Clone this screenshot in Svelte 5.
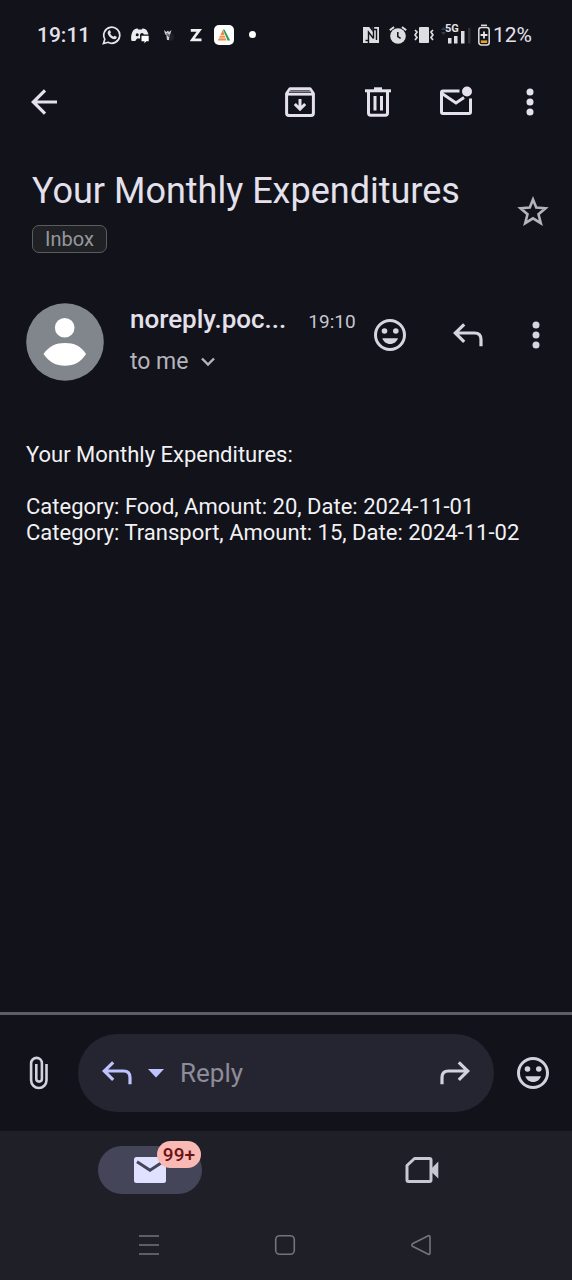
<script>
  let reply = $state('');
  const entries = [
    { category: 'Food', amount: 20, date: '2024-11-01' },
    { category: 'Transport', amount: 15, date: '2024-11-02' }
  ];
</script>

{#snippet smile()}
  <svg width="32" height="32" viewBox="0 0 32 32" fill="currentColor" aria-hidden="true">
    <circle cx="16" cy="16" r="14.5" fill="none" stroke="currentColor" stroke-width="3" />
    <circle cx="10.5" cy="12" r="2.8" />
    <circle cx="21.8" cy="12" r="2.8" />
    <path d="M8.3 19.2H24C22.800 22.600 20 25 16.100 25S9.500 22.600 8.300 19.200Z" />
  </svg>
{/snippet}

{#snippet replyArrow()}
  <svg width="30" height="24" viewBox="0 0 30 24" fill="none" stroke="currentColor" stroke-width="3.200" aria-hidden="true">
    <path d="M11.200 1.300 2.200 10 11.200 18.800M2.500 10H21.500Q28 10 28 16.500V23.200" />
  </svg>
{/snippet}

{#snippet dots()}
  <svg width="8" height="28" viewBox="0 0 8 28" fill="currentColor" aria-hidden="true">
    <circle cx="4" cy="4" r="3.500" /><circle cx="4" cy="14" r="3.500" /><circle cx="4" cy="24" r="3.500" />
  </svg>
{/snippet}

<div class="screen">
  <header class="status">
    <div class="side">
      <span class="clock">19:11</span>
      <span class="cell">
        <svg width="20" height="20" viewBox="0 0 20 20" aria-hidden="true">
          <path d="M1.500 18.500 2.800 14.200A8 8 0 1 1 6 17.300Z" fill="none" stroke="#e6e6ea" stroke-width="1.700" />
          <path d="M6.900 5.400c.5-.4 1-.2 1.200.2l.8 1.700c.1.400-.6 1.100-.7 1.300.7 1.500 1.800 2.500 3.200 3.100.3-.1 1-1 1.300-.9l1.800.9c.4.200.2 1.200-.2 1.700-1 1-2.500 1-4 .3-2-.9-3.800-2.800-4.500-4.900-.4-1.400 0-2.700 1.100-3.400Z" fill="#e6e6ea" />
        </svg>
      </span>
      <span class="cell">
        <svg width="20" height="18" viewBox="0 0 20 18" aria-hidden="true">
          <path d="M1.300 14.500C.6 10 1.800 6 3.800 3.800 5.200 2.800 6.600 2.500 7.600 2.500l.6 1h3.600l.6-1c1.200 0 2.600.4 3.800 1.300 1 1.400 1.800 2.700 2.200 4.800H10.200v4H7L5.500 14.800C3.800 15.300 2.300 15.200 1.300 14.500Z" fill="#ececf0" />
          <circle cx="7.200" cy="8.800" r="1.500" fill="#12121a" /><path d="M10.200 12V8.800a1.800 1.800 0 0 1 3.600 0Z" fill="#12121a" />
          <path d="M11.500 9.800h7.200v5.500h-2.400l-1.900 1.900v-1.900h-2.900Z" fill="#fff" />
        </svg>
      </span>
      <span class="cell">
        <svg width="14" height="14" viewBox="0 0 14 14" aria-hidden="true">
          <circle cx="9" cy="9" r="4" fill="#202027" />
          <path d="M3 2 5.500 4 7 2.500 8 4 10.500 2 9.500 5.500 8.500 7 8 12H6L5.500 7.500 4 6Z" fill="#c9c9ce" />
          <path d="M6.200 5v3M7.700 6v3" stroke="#33333a" stroke-width=".8" />
        </svg>
      </span>
      <span class="cell">
        <svg width="12" height="14" viewBox="0 0 12 14" aria-hidden="true"><path d="M.8 2.300H9.300L2.300 11.800H11.500" fill="none" stroke="#f0f0f3" stroke-width="2.700" /></svg>
      </span>
      <span class="cell">
        <svg width="20" height="20" viewBox="0 0 20 20" aria-hidden="true">
          <rect width="20" height="20" rx="5" fill="#fff" />
          <path d="M9 4.500 3.800 15.500H12.500L10.500 10Z" fill="#ee8a4a" /><path d="M9 4.500H10.500L16.200 15.500H13.500Z" fill="#2c9b57" />
          <path d="M5 10.500h6M4 13h8.500" stroke="#fff" stroke-width=".7" />
        </svg>
      </span>
      <span class="cell"><i class="dot"></i></span>
    </div>
    <div class="side">
      <span class="cell narrow">
        <svg width="18" height="18" viewBox="0 0 18 18" aria-hidden="true">
          <rect x="0" y="1" width="16" height="16" fill="#dedee2" />
          <path d="M5.500 17V6L10.500 12.500M10.500 1V12.500M5.500 14.500H2.500M10.500 3.500H13.500V14" fill="none" stroke="#12121a" stroke-width="1.400" />
          <path d="M6.200 1H9.800V6Z" fill="#12121a" />
        </svg>
      </span>
      <span class="cell narrow">
        <svg width="18" height="18" viewBox="0 0 18 18" aria-hidden="true">
          <circle cx="9" cy="10" r="7.800" fill="#dedee2" />
          <path d="M.8 4.300 5 1M17.200 4.300 13 1" stroke="#dedee2" stroke-width="2" />
          <path d="M8.800 6v4.500l2.800 1.900" fill="none" stroke="#12121a" stroke-width="1.500" />
        </svg>
      </span>
      <span class="cell narrow">
        <svg width="20" height="18" viewBox="0 0 20 18" aria-hidden="true">
          <rect x="5" y="1" width="10" height="16" rx="1" fill="#dedee2" />
          <path d="M1 4 3 6 1 9 3 11.500 1 14M19 4 17 6 19 9 17 11.500 19 14" fill="none" stroke="#dedee2" stroke-width="1.700" />
        </svg>
      </span>
      <span class="signal">
        <small>5G</small>
        <svg width="32" height="20" viewBox="0 0 32 20" fill="#dedee2" aria-hidden="true">
          <path d="M0 5 2.500 2 5 5ZM0 7 2.500 10 5 7Z" fill="#3a3a43" />
          <path d="M7 13h3.500v5.500H7ZM13 11h3.500v7.500H13ZM20 6h3.500v12.500H20Z" /><path d="M27 3H29.500V18.500H27Z" fill="#30303a" />
        </svg>
      </span>
      <svg width="14" height="22" viewBox="0 0 14 22" aria-hidden="true">
        <path d="M4 1.300h6" stroke="#dedee2" stroke-width="1.500" />
        <rect x="1.800" y="3.500" width="10.400" height="17.500" rx="2.500" fill="none" stroke="#dedee2" stroke-width="1.500" />
        <path d="M7 7.500v7M3.600 11h6.800" stroke="#e9e9ed" stroke-width="1.800" /><path d="M3.800 17.700h6.400" stroke="#e8a21c" stroke-width="2.600" />
      </svg>
      <span class="percent">12%</span>
    </div>
  </header>

  <nav class="toolbar" aria-label="Message actions">
    <button class="icon back" aria-label="Back">
      <svg width="26" height="28" viewBox="0 0 26 28" fill="none" stroke="currentColor" stroke-width="3.200" aria-hidden="true"><path d="M14 2.300 2.300 14 14 25.700M2.600 14H26" /></svg>
    </button>
    <button class="icon" aria-label="Archive">
      <svg width="30" height="30" viewBox="0 0 30 30" aria-hidden="true">
        <path d="M1.600 6.500 5 1.700H25L28.400 6.500V26Q28.400 28.400 26 28.400H4Q1.600 28.400 1.600 26Z" fill="none" stroke="currentColor" stroke-width="3" stroke-linejoin="round" />
        <path d="M4.500 4.500H25.500" stroke="#85858d" stroke-width="2" /><path d="M2 7.300H28" stroke="currentColor" stroke-width="2.600" />
        <path d="M15 12v9.500M9.800 17 15 22.200 20.200 17" fill="none" stroke="currentColor" stroke-width="3" />
      </svg>
    </button>
    <button class="icon" aria-label="Delete">
      <svg width="26" height="30" viewBox="0 0 26 30" fill="none" stroke="currentColor" stroke-width="3" aria-hidden="true">
        <path d="M0 3.800H26" /><path d="M9 1.800h8" /><path d="M3.500 4V26Q3.500 28.200 5.700 28.200H20.300Q22.500 28.200 22.500 26V4M10 9V23.500M16.500 9V23.500" />
      </svg>
    </button>
    <button class="icon" aria-label="Mark as unread">
      <svg width="34" height="32" viewBox="0 0 34 32" fill="none" stroke="currentColor" stroke-width="3" aria-hidden="true">
        <path d="M20.500 5H4Q2.500 5 2.500 6.500V26Q2.500 27.500 4 27.500H30Q31.500 27.500 31.500 26V12.500M3 7.500 17 17 25 11.500" />
        <circle cx="28" cy="5.500" r="5" fill="currentColor" stroke="none" />
      </svg>
    </button>
    <button class="icon slim" aria-label="More options">{@render dots()}</button>
  </nav>

  <main>
    <section class="subject">
      <div class="heading">
        <h1>Your Monthly Expenditures</h1>
        <span class="chip">Inbox</span>
      </div>
      <button class="icon slim star" aria-label="Add star">
        <svg width="32" height="30" viewBox="0 0 32 30" fill="none" stroke="currentColor" stroke-width="2.600" aria-hidden="true">
          <path d="M16 3.500 19.200 11.500 28.500 12.200 21.500 18.200 23.800 27.200 16 22.300 8.200 27.200 10.500 18.200 3.500 12.200 12.800 11.500Z" />
        </svg>
      </button>
    </section>

    <section class="sender">
      <svg width="78" height="78" viewBox="0 0 78 78" aria-hidden="true">
        <circle cx="39" cy="39" r="38.800" fill="#80868b" /><circle cx="38.700" cy="24.800" r="9.800" fill="#fff" />
        <path d="M17.500 51C23 43 30 40 39 40S55 43 60 51C55 59 48 62.800 39 62.800S23 59 17.500 51Z" fill="#fff" />
      </svg>
      <div class="who">
        <div class="line"><strong>noreply.poc...</strong><time>19:10</time></div>
        <button class="to">to me
          <svg width="14" height="10" viewBox="0 0 14 10" fill="none" stroke="currentColor" stroke-width="2.400" aria-hidden="true"><path d="M1 1.500 7 7.500 13 1.500" /></svg>
        </button>
      </div>
      <div class="actions">
        <button class="icon" aria-label="Add reaction">{@render smile()}</button>
        <button class="icon" aria-label="Reply">{@render replyArrow()}</button>
        <button class="icon slim" aria-label="More message options">{@render dots()}</button>
      </div>
    </section>

    <article>
      <p>Your Monthly Expenditures:</p>
      <p>
        {#each entries as e}
          <span>Category: {e.category}, Amount: {e.amount}, Date: {e.date}</span>
        {/each}
      </p>
    </article>
  </main>

  <form class="composer" onsubmit={(e) => e.preventDefault()}>
    <button type="button" class="icon slim" aria-label="Attach file">
      <svg width="20" height="34" viewBox="0 0 20 34" fill="none" stroke="currentColor" stroke-width="2.600" aria-hidden="true">
        <path d="M17.500 8V24.300A7.700 7.700 0 0 1 2.100 24.300V7.300A5.400 5.400 0 0 1 12.900 7.300V22.800A2.800 2.800 0 0 1 7.300 22.800V8" />
      </svg>
    </button>
    <div class="field">
      <button type="button" class="accent" aria-label="Reply">{@render replyArrow()}</button>
      <button type="button" class="accent" aria-label="Choose reply type">
        <svg width="16" height="10" viewBox="0 0 16 10" fill="currentColor" aria-hidden="true"><path d="M0 1H16L8 9.500Z" /></svg>
      </button>
      <input type="text" aria-label="Reply text" placeholder="Reply" bind:value={reply} />
      <button type="button" class="forward" aria-label="Forward">{@render replyArrow()}</button>
    </div>
    <button type="button" class="icon slim" aria-label="Insert emoji">{@render smile()}</button>
  </form>

  <footer>
    <nav class="tabs" aria-label="Apps">
      <button class="tab" aria-label="Mail">
        <span class="pill">
          <svg width="32" height="26" viewBox="0 0 32 26" aria-hidden="true">
            <rect width="32" height="26" rx="2.500" fill="#e0e0ff" /><path d="M3 4.800 16 13.200 29 4.800" fill="none" stroke="#444559" stroke-width="3" />
          </svg>
          <span class="badge">99+</span>
        </span>
      </button>
      <button class="tab" aria-label="Meet">
        <svg width="34" height="28" viewBox="0 0 34 28" aria-hidden="true">
          <path d="M9.500 2.500H24.500Q26 2.500 26 4V24Q26 25.500 24.500 25.500H3.500Q2 25.500 2 24V9.500Z" fill="none" stroke="currentColor" stroke-width="3" stroke-linejoin="round" />
          <path d="M26 13 33.300 5.500V22.500L26 15.500Z" fill="currentColor" />
        </svg>
      </button>
    </nav>
    <nav class="system" aria-label="System">
      <button aria-label="Recent apps"><svg width="22" height="22" viewBox="0 0 22 22" aria-hidden="true"><path d="M1 2H21M1 11H21M1 20H21" /></svg></button>
      <button aria-label="Home"><svg width="22" height="22" viewBox="0 0 22 22" aria-hidden="true"><rect x="1.700" y="1.700" width="18.600" height="18.600" rx="4" /></svg></button>
      <button aria-label="Go back"><svg width="22" height="22" viewBox="0 0 22 22" aria-hidden="true"><path d="M18.300 1.800Q20 1.200 20 3V19Q20 20.800 18.300 20.200L2.500 12.200Q1 11 2.500 9.800Z" /></svg></button>
    </nav>
  </footer>
</div>

<style>
  :global(body) { margin: 0; background: #12121a; }
  .screen {
    display: flex; flex-direction: column; min-height: 100vh;
    background: #12121a; color: #e4e1ec; font-family: Roboto, sans-serif;
  }
  svg { display: block; flex: none; }
  button {
    display: flex; align-items: center; justify-content: center;
    padding: 0; border: 0; background: none; color: inherit; font: inherit; cursor: pointer;
  }
  .icon { width: 48px; height: 48px; flex: none; }
  .icon.slim { width: 40px; }

  .status { display: flex; justify-content: space-between; height: 69px; padding: 0 40px 0 37px; box-sizing: border-box; }
  .side { display: flex; align-items: center; }
  .clock { width: 61px; font-size: 21px; font-weight: 500; }
  .cell { display: flex; justify-content: center; width: 28px; }
  .cell.narrow { width: 26px; }
  .dot { width: 7px; height: 7px; border-radius: 50%; background: #fff; }
  .signal { position: relative; width: 40px; display: flex; justify-content: center; }
  .signal small { position: absolute; top: -2px; left: 8px; font-size: 11px; line-height: 12px; font-weight: 700; }
  .percent { margin-left: 2px; font-size: 21px; }

  .toolbar { display: flex; align-items: center; gap: 30px; height: 66px; padding: 0 22px 0 20px; }
  .back { margin-right: auto; }

  .subject { display: flex; align-items: center; justify-content: space-between; padding: 34px 19px 0 32px; }
  h1 { margin: 0; font-size: 36px; line-height: 44px; font-weight: 400; }
  .chip {
    display: inline-block; margin-top: 12px; padding: 0 12px; border: 1px solid #5c5c60; border-radius: 7px;
    background: #202125; color: #96979c; font-size: 20px; line-height: 26px;
  }
  .star { color: #b5b4bd; }

  .sender { display: flex; align-items: center; gap: 26px; padding: 46px 16px 0 26px; }
  .who { flex: 1; min-width: 0; margin-bottom: 2px; }
  .line { display: flex; align-items: baseline; gap: 22px; line-height: 40px; white-space: nowrap; }
  strong { font-size: 26px; font-weight: 500; }
  time { font-size: 19px; color: #c7c5d0; }
  .to { gap: 12px; font-size: 23px; line-height: 40px; color: #b5b4bd; }
  .actions { display: flex; gap: 30px; margin-bottom: 14px; color: #d6d4de; }
  .actions .slim { margin-left: -6px; }

  article { padding: 58px 26px; color: #f1f1f4; font-size: 22px; line-height: 26px; }
  p { margin: 0 0 26px; }
  p span { display: block; }

  .composer {
    display: flex; align-items: center; gap: 19px; margin-top: auto; padding: 19px;
    border-top: 3px solid #5e5e67; color: #d3d1dc;
  }
  .field { display: flex; flex: 1; align-items: center; min-width: 0; height: 78px; padding: 0 24px; border-radius: 39px; background: #252531; box-sizing: border-box; gap: 16px; }
  .accent { height: 48px; color: #bec2ff; }
  .forward { height: 48px; transform: scaleX(-1); }
  input { flex: 1; min-width: 0; padding: 0; border: 0; outline: 0; background: none; color: #e4e1ec; font: 26px Roboto, sans-serif; }
  input::placeholder { color: #8d8c98; opacity: 1; }

  footer { background: #1f1f27; }
  .tabs { display: flex; justify-content: space-around; padding: 15px 14px 16px; }
  .tab { flex: 1; color: #c9c7d3; }
  .pill { position: relative; display: flex; align-items: center; justify-content: center; width: 104px; height: 48px; border-radius: 24px; background: #444559; }
  .badge { position: absolute; top: -5px; right: 1px; padding: 0 6px; border-radius: 14px; background: #f9b9b4; color: #6b1214; font-size: 19px; line-height: 27px; font-weight: 500; }
  .system { display: flex; justify-content: center; gap: 88px; padding: 6px 2px 7px 0; }
  .system button { width: 48px; height: 57px; }
  .system svg { fill: none; stroke: #74747c; stroke-width: 1.600px; }
</style>
